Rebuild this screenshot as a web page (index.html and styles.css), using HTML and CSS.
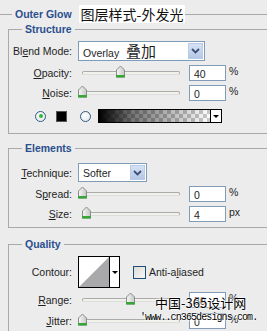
FILE: index.html
```html
<!DOCTYPE html>
<html lang="en">
<head>
    <meta charset="UTF-8">
    <title>Outer Glow</title>
    <link rel="stylesheet" href="styles.css">
</head>
<body>
    <div class="title">
        <span class="title-text">Outer Glow</span>
        <span class="title-cn">图层样式-外发光</span>
    </div>

    <fieldset class="group structure">
        <legend>Structure</legend>
        <div class="row row-blend">
            <span class="lbl">Bl<u>e</u>nd Mode:</span>
            <div class="select select-blend">
                <span class="select-val">Overlay <span class="cn">叠加</span></span>
                <span class="select-btn">
                    <svg width="9" height="6" viewBox="0 0 9 6"><path d="M1 1 L4.5 4.5 L8 1" fill="none" stroke="#3b4f78" stroke-width="1.8"/></svg>
                </span>
            </div>
        </div>
        <div class="row">
            <span class="lbl"><u>O</u>pacity:</span>
            <div class="slider"><span class="thumb" style="left: 40%"></span></div>
            <span class="num">40</span>
            <span class="unit">%</span>
        </div>
        <div class="row">
            <span class="lbl"><u>N</u>oise:</span>
            <div class="slider"><span class="thumb" style="left: 0%"></span></div>
            <span class="num">0</span>
            <span class="unit">%</span>
        </div>
        <div class="row row-color">
            <span class="radio checked"></span>
            <span class="swatch"></span>
            <span class="radio"></span>
            <div class="gradient">
                <span class="gradient-fill"></span>
                <span class="gradient-btn"></span>
            </div>
        </div>
    </fieldset>

    <fieldset class="group elements">
        <legend>Elements</legend>
        <div class="row row-tech">
            <span class="lbl"><u>T</u>echnique:</span>
            <div class="select select-tech">
                <span class="select-val">Softer</span>
                <span class="select-btn">
                    <svg width="9" height="6" viewBox="0 0 9 6"><path d="M1 1 L4.5 4.5 L8 1" fill="none" stroke="#3b4f78" stroke-width="1.8"/></svg>
                </span>
            </div>
        </div>
        <div class="row">
            <span class="lbl">S<u>p</u>read:</span>
            <div class="slider"><span class="thumb" style="left: 0%"></span></div>
            <span class="num">0</span>
            <span class="unit">%</span>
        </div>
        <div class="row">
            <span class="lbl"><u>S</u>ize:</span>
            <div class="slider"><span class="thumb" style="left: 4%"></span></div>
            <span class="num">4</span>
            <span class="unit">px</span>
        </div>
    </fieldset>

    <fieldset class="group quality">
        <legend>Quality</legend>
        <div class="row row-contour">
            <span class="lbl">Contour:</span>
            <div class="contour">
                <svg class="contour-curve" width="30" height="30" viewBox="0 0 30 30"><path d="M0 30 L30 0 L30 30 Z" fill="#a9a9ab"/></svg>
                <span class="contour-btn"></span>
            </div>
            <span class="check"></span>
            <span class="check-lbl">Anti-a<u>l</u>iased</span>
        </div>
        <div class="row row-range">
            <span class="lbl"><u>R</u>ange:</span>
            <div class="slider"><span class="thumb" style="left: 50%"></span></div>
            <span class="num">50</span>
            <span class="unit">%</span>
        </div>
        <div class="row row-jitter">
            <span class="lbl"><u>J</u>itter:</span>
            <div class="slider"><span class="thumb" style="left: 0%"></span></div>
            <span class="num">0</span>
            <span class="unit">%</span>
        </div>
    </fieldset>

    <div class="watermark">
        <div class="wm-cn">中国-365设计网</div>
        <div class="wm-url">'www..cn365designs.com.</div>
    </div>
</body>
</html>
```

FILE: styles.css
```css
* {
    box-sizing: border-box;
}

body {
    margin: 0;
    width: 267px;
    height: 331px;
    overflow: hidden;
    position: relative;
    background-color: #ececec;
    color: #1e1e1e;
    font-family: 'Liberation Sans', Arial, sans-serif;
    font-size: 10.5px;
}

u {
    text-decoration-thickness: 1px;
    text-underline-offset: 1px;
}

/* title bar */
.title {
    display: flex;
    align-items: center;
    height: 18px;
    margin-top: 5px;
}

.title::before,
.title::after {
    content: '';
    height: 1px;
    background: #a9a9a9;
}

.title::before {
    width: 12px;
    margin-right: 3px;
}

.title::after {
    flex: 1;
}

.title-text {
    font-weight: bold;
    color: #2b4f8e;
    font-size: 10.5px;
    margin-right: 7px;
}

.title-cn {
    background: #fff;
    font-family: 'Noto Sans CJK SC', sans-serif;
    font-size: 14px;
    line-height: 18px;
    padding: 0 2px;
    color: #111;
}

/* groups */
.group {
    margin: 0 0 0 8px;
    width: 280px;
    border: 1px solid #a9a9a9;
    padding: 0 0 10px 0;
    min-width: 0;
}

.group legend {
    margin-left: 13px;
    padding: 0 3px;
    font-weight: bold;
    color: #2b4f8e;
    line-height: 13px;
}

.elements {
    margin-top: 8px;
    padding-bottom: 5px;
}

.quality {
    margin-top: 10px;
}

.row {
    display: flex;
    align-items: center;
    height: 16px;
    margin-top: 4px;
}

.lbl {
    width: 63px;
    margin-right: 6px;
    text-align: right;
    white-space: nowrap;
}

/* selects */
.select {
    display: flex;
    height: 20px;
    background: #fff;
    border: 1px solid #7f9db9;
}

.select-val {
    flex: 1;
    padding-left: 4px;
    line-height: 18px;
}

.select-val .cn {
    font-family: 'Noto Sans CJK SC', sans-serif;
    font-size: 15px;
    margin-left: 4px;
}

.select-btn {
    width: 15px;
    margin: 1px;
    display: flex;
    align-items: center;
    justify-content: center;
    background: linear-gradient(#d6e2f4, #b4c7e4);
    border: 1px solid #b9cbe6;
}

.row-blend {
    height: 20px;
    margin-top: 5px;
}

.select-blend {
    width: 127px;
}

.row-tech {
    height: 19px;
    margin-top: 8px;
}

.select-tech {
    width: 69px;
    height: 19px;
}

/* sliders */
.slider {
    position: relative;
    width: 98px;
    height: 4px;
    margin-left: 4px;
    border: 1px solid #ababab;
    border-bottom-color: #ddd;
    border-radius: 2px;
    background: #f2f2ec;
}

.thumb {
    position: absolute;
    top: -7px;
    width: 11px;
    height: 13px;
    margin-left: -6px;
    background: no-repeat url("data:image/svg+xml,%3Csvg xmlns='http://www.w3.org/2000/svg' width='11' height='13'%3E%3Cdefs%3E%3ClinearGradient id='g' x1='0' x2='1'%3E%3Cstop offset='0' stop-color='%23f6f6f6'/%3E%3Cstop offset='1' stop-color='%23c4c8c4'/%3E%3C/linearGradient%3E%3C/defs%3E%3Cpath d='M1.5 5 L5.5 1 L9.5 5 L9.5 12 L1.5 12 Z' fill='url(%23g)' stroke='%238a8f8a'/%3E%3Crect x='1' y='10' width='9' height='2.5' fill='%2339a539'/%3E%3C/svg%3E");
}

.num {
    width: 37px;
    height: 16px;
    margin-left: 9px;
    padding-left: 4px;
    line-height: 14px;
    background: #fff;
    border: 1px solid #7f9db9;
    padding-top: 1px;
}

.unit {
    margin-left: 3px;
    align-self: flex-start;
    line-height: 12px;
}

/* colour row */
.row-color {
    height: 14px;
    margin-top: 8px;
}

.radio {
    width: 11px;
    height: 11px;
    border: 1px solid #2f5b8a;
    border-radius: 50%;
    background: radial-gradient(circle at 40% 40%, #fff, #dfe3e6);
    display: flex;
    align-items: center;
    justify-content: center;
    margin-left: 13px;
}

.radio:first-child {
    margin-left: 26px;
}

.radio.checked::after {
    content: '';
    width: 4px;
    height: 4px;
    border-radius: 50%;
    background: #37b537;
}

.swatch {
    width: 11px;
    height: 11px;
    margin-left: 10px;
    background: #000;
    border: 1px solid #555;
}

.gradient {
    display: flex;
    width: 124px;
    height: 14px;
    margin-left: 7px;
    border: 1px solid #000;
}

.gradient-fill {
    flex: 1;
    background:
        linear-gradient(to right, #000, rgba(0,0,0,0.55) 30%, rgba(0,0,0,0) 100%),
        repeating-conic-gradient(#c9c9c9 0 25%, #ffffff 0 50%) 0 0 / 8px 8px;
}

.gradient-btn {
    width: 11px;
    border-left: 1px solid #000;
    background: #fff;
    display: flex;
    align-items: center;
    justify-content: center;
}

.gradient-btn::after,
.contour-btn::after {
    content: '';
    border-left: 3px solid transparent;
    border-right: 3px solid transparent;
    border-top: 3px solid #000;
}

/* contour row */
.row-contour {
    height: 32px;
    margin-top: 5px;
}

.contour {
    display: flex;
    width: 42px;
    height: 32px;
    border: 1px solid #000;
    background: #fff;
}

.contour-curve {
    display: block;
}

.contour-btn {
    flex: 1;
    border-left: 1px solid #000;
    display: flex;
    align-items: center;
    justify-content: center;
}

.check {
    width: 13px;
    height: 13px;
    margin-left: 13px;
    border: 1px solid #1c4f7c;
    background: linear-gradient(135deg, #dcdcd6, #f6f6f4);
}

.check-lbl {
    margin-left: 3px;
}

.row-jitter {
    margin-top: 5px;
}

/* watermark */
.watermark {
    position: absolute;
    left: 140px;
    top: 295px;
    color: #000;
    text-shadow: 0 0 2px #fff, 0 0 2px #fff, 0 0 2px #fff;
}

.wm-cn {
    margin-left: 15px;
    font-family: 'Noto Sans CJK SC', sans-serif;
    font-size: 13px;
    line-height: 16px;
}

.wm-url {
    margin-top: 1px;
    font-family: 'Liberation Mono', monospace;
    font-size: 10px;
    line-height: 12px;
    letter-spacing: -0.9px;
}
```
